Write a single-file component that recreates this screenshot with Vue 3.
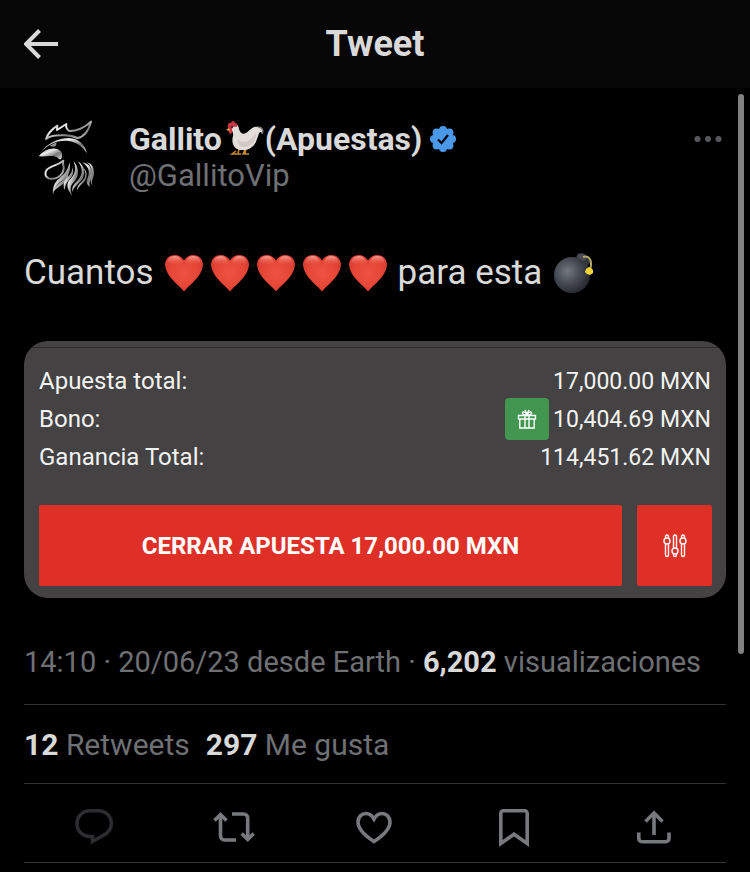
<template>
  <div class="screen">
    <header class="topbar">
      <button class="back" type="button" aria-label="Volver">
        <svg width="36" height="32" viewBox="0 0 36 32">
          <path d="M15.500 2.500 2 16l13.500 13.500M2.500 16H34" />
        </svg>
      </button>
      <h1>Tweet</h1>
    </header>

    <main class="tweet">
      <div class="author">
        <svg class="avatar" width="88" height="90" viewBox="-18 0 264 270" aria-hidden="true">
          <defs>
            <linearGradient id="steel" x1="0" y1="0" x2="1" y2="1">
              <stop offset="0" stop-color="#777" />
              <stop offset=".35" stop-color="#eee" />
              <stop offset=".65" stop-color="#777" />
              <stop offset="1" stop-color="#ddd" />
            </linearGradient>
          </defs>
          <g fill="none" stroke="url(#steel)" stroke-width="6" stroke-linejoin="round" stroke-linecap="round">
            <path d="M48 81C54 64 68 50 82 41L81 54C91 48 99 42 109 36C107 44 110 52 118 57C139 58 165 47 183 29C175 58 159 75 142 78C124 69 108 69 93 70C74 70 58 73 48 81Z" />
            <path d="M100 146C83 160 71 160 61 166C43 173 42 193 56 199C76 205 98 192 101 170C101 158 97 154 100 146Z" />
          </g>
          <g fill="url(#steel)">
            <path d="M30 125C50 94 84 78 117 78C146 79 166 99 171 124C158 104 140 90 115 87C82 84 52 97 30 125Z" />
            <path d="M26 133C40 117 55 108 76 110C91 112 99 121 96 135C95 143 88 145 84 138C72 127 49 135 26 133Z" />
            <path d="M60 101L80 91L78 101C72 104 65 105 60 101Z" />
            <path d="M119 151C112 177 102 188 87 200C74 210 67 224 69 249C74 224 82 216 100 204C118 192 123 174 119 151Z" />
            <path d="M113 184C109 202 96 208 86 216C76 224 71 231 70 239C80 228 94 221 103 212C112 204 117 194 113 184Z" />
            <path d="M131 148C141 176 132 190 119 204C110 214 108 229 127 252C118 228 122 220 134 208C149 190 147 166 131 148Z" />
            <path d="M127 165C128 185 115 192 106 204C98 214 101 230 105 234C105 214 114 210 124 196C130 187 131 175 127 165Z" />
            <path d="M143 148C160 169 158 187 145 203C135 214 124 222 127 240C131 224 147 215 157 201C169 180 163 160 143 148Z" />
            <path d="M156 151C180 167 180 183 172 200C167 212 173 220 180 224C175 211 181 205 185 191C188 169 178 154 156 151Z" />
            <path d="M169 150C188 154 195 173 191 190C187 205 183 209 188 221C177 205 181 196 184 181C186 168 181 158 169 150Z" />
            <path d="M161 169C170 185 166 200 155 209C145 217 140 227 141 235C146 224 155 218 164 208C173 194 172 179 161 169Z" />
          </g>
        </svg>

        <div class="names">
          <div class="name">
            <span>Gallito</span>
            <svg class="rooster" width="38" height="36" viewBox="0 0 38 36" role="img" aria-label="gallo">
              <path d="M10 30l-4 3h9M19 29l-2 4h6M13 28l-1 5M20 27l-1 6" fill="none" stroke="#c98a2c" stroke-width="1.500" />
              <path d="M5 5C8 2 13 3 13 8C14 12 17 14 20 12C25 9 26 5 32 6C36 7 37 9 36 12C33 9 33 14 31 18C29 25 23 30 16 29C8 29 5 22 7 15C8 12 5 9 5 5Z" fill="#e4dedb" />
              <path d="M12 18C16 24 24 21 30 12C30 21 24 27 17 26C12 25 11 22 12 18Z" fill="#d3cac6" />
              <path d="M32 6c4 0 6 3 4 7" fill="none" stroke="#77736f" stroke-width="1.500" />
              <path d="M2 7C1 3 3 1 5 2C6-1 9 0 9 2C12 2 12 5 10 6C7 5 6 7 6 9C7 12 5 14 3 12C2 10 3 9 2 7Z" fill="#c93643" />
              <path d="M3 7 0 9l4 1z" fill="#e0ad4c" />
              <circle cx="6" cy="6" r="1" fill="#222" />
            </svg>
            <span>(Apuestas)</span>
            <svg class="verified" width="26" height="26" viewBox="0 0 26 26" role="img" aria-label="Cuenta verificada">
              <g fill="#4a99e9">
                <circle cx="13" cy="13" r="10" />
                <circle cx="13" cy="4" r="4" />
                <circle cx="19.400" cy="6.600" r="4" />
                <circle cx="22" cy="13" r="4" />
                <circle cx="19.400" cy="19.400" r="4" />
                <circle cx="13" cy="22" r="4" />
                <circle cx="6.600" cy="19.400" r="4" />
                <circle cx="4" cy="13" r="4" />
                <circle cx="6.600" cy="6.600" r="4" />
              </g>
              <path d="M8 13.500l3.500 3.500 6.500-8" fill="none" stroke="#05080c" stroke-width="2.200" />
            </svg>
          </div>
          <a class="handle" href="#">@GallitoVip</a>
        </div>

        <button class="more" type="button" aria-label="Más opciones">
          <svg width="28" height="8" viewBox="0 0 28 8">
            <circle cx="3.500" cy="4" r="3" />
            <circle cx="14" cy="4" r="3" />
            <circle cx="24.500" cy="4" r="3" />
          </svg>
        </button>
      </div>

      <p class="text">
        <span>Cuantos</span>
        <span class="hearts">
          <svg v-for="n in 5" :key="n" width="38" height="38" viewBox="0 0 38 38" role="img" aria-label="corazón">
            <defs>
              <radialGradient :id="'heart' + n" cx=".5" cy=".5" r=".6">
                <stop offset="0" stop-color="#ee5340" />
                <stop offset=".6" stop-color="#e64636" />
                <stop offset="1" stop-color="#d43a31" />
              </radialGradient>
              <linearGradient :id="'shine' + n" x1="0" y1="0" x2="0" y2="1">
                <stop offset="0" stop-color="#ffb9ad" stop-opacity=".8" />
                <stop offset="1" stop-color="#ee5340" stop-opacity="0" />
              </linearGradient>
            </defs>
            <path :fill="'url(#heart' + n + ')'" d="M19 37.500C14 31 1 23 0 11C0 5 4 1 9.500 1C14 1 17 3 19 6.500C21 3 24 1 28.500 1C34 1 38 5 38 11C37 23 24 31 19 37.500Z" />
            <path :fill="'url(#shine' + n + ')'" d="M2 10C2 5 5 2 10 2C14 2 17 5 17 10C12 12 6 12 2 10ZM36 10C36 5 33 2 28 2C24 2 21 5 21 10C26 12 32 12 36 10Z" />
          </svg>
        </span>
        <span>para esta</span>
        <svg class="bomb" width="41" height="40" viewBox="0 0 41 40" role="img" aria-label="bomba">
          <defs>
            <radialGradient id="iron" cx=".38" cy=".4" r=".65">
              <stop offset="0" stop-color="#737981" />
              <stop offset=".5" stop-color="#484c54" />
              <stop offset="1" stop-color="#26282e" />
            </radialGradient>
          </defs>
          <circle cx="19" cy="22" r="18" fill="url(#iron)" />
          <path d="M23 4C25 0 30-1 33 2L38 9L33 14Z" fill="#34373d" />
          <ellipse cx="29" cy="4" rx="5" ry="3" fill="#484c52" transform="rotate(28 29 4)" />
          <path d="M30 4C36 2 40 7 37 17" fill="none" stroke="#b5a76a" stroke-width="2" />
          <path d="M36 14l2 1 2 2v3l-3 2-3-1-2-2 1-3z" fill="#f2d537" />
        </svg>
      </p>

      <section class="bet">
        <dl>
          <div v-for="row in rows" :key="row.label" class="bet-row">
            <dt>{{ row.label }}</dt>
            <dd>
              <span v-if="row.gift" class="gift">
                <svg width="20" height="20" viewBox="0 0 20 20" aria-hidden="true">
                  <path d="M1.500 6.500h17V10h-17zM2.800 10v9h14.400v-9M8 6.500V19M12 6.500V19M10 6C7 6 5 5 5.500 3.500S9 3 10 6C11 3 14 2 14.500 3.500S13 6 10 6M10 5 8 1M10 5l2-4" />
                </svg>
              </span>
              {{ row.value }}
            </dd>
          </div>
        </dl>
        <div class="bet-actions">
          <button class="close-bet" type="button">CERRAR APUESTA 17,000.00 MXN</button>
          <button class="settings" type="button" aria-label="Ajustes">
            <svg width="24" height="24" viewBox="0 0 24 24">
              <circle cx="4" cy="7" r="3" />
              <circle cx="12" cy="17" r="3" />
              <circle cx="20" cy="7" r="3" />
              <path d="M2.500 4V2.500a1.500 1.500 0 0 1 3 0V4M2.500 10v11a1.500 1.500 0 0 0 3 0V10M10.500 14V2.500a1.500 1.500 0 0 1 3 0V14M10.500 20v1a1.500 1.500 0 0 0 3 0v-1M18.500 4V2.500a1.500 1.500 0 0 1 3 0V4M18.500 10v11a1.500 1.500 0 0 0 3 0V10" />
            </svg>
          </button>
        </div>
      </section>

      <p class="meta">14:10 · 20/06/23 desde Earth · <strong>6,202</strong> visualizaciones</p>

      <div class="stats">
        <a href="#"><strong>12</strong> Retweets</a>
        <a href="#"><strong>297</strong> Me gusta</a>
      </div>

      <div class="actions">
        <button v-for="action in actions" :key="action.label" type="button" :aria-label="action.label" :disabled="action.disabled">
          <svg width="48" height="48" viewBox="0 0 48 48">
            <path :d="action.icon" />
          </svg>
        </button>
      </div>
    </main>

    <div class="scrollbar"></div>
  </div>
</template>

<script setup>
const rows = [
  { label: 'Apuesta total:', value: '17,000.00 MXN' },
  { label: 'Bono:', value: '10,404.69 MXN', gift: true },
  { label: 'Ganancia Total:', value: '114,451.62 MXN' }
]

const actions = [
  {
    label: 'Responder',
    disabled: true,
    icon: 'M20 7.700h8C35.500 7.700 41.300 13 41.300 20.500C41.300 26 38 30 33 32.500L22.500 38.500V33.500H20C12.500 33.500 7 28 7 20.700S12.500 7.700 20 7.700Z'
  },
  {
    label: 'Retwittear',
    icon: 'M4.500 17.500 10.500 11.500l6 6M10.500 12v21a4 4 0 0 0 4 4H26M22 11h11.700a4 4 0 0 1 4 4v21M31.700 30.500l6 6 6-6'
  },
  {
    label: 'Me gusta',
    icon: 'M24 38.500C14 32 8 25.500 8 19C8 14 11.600 10.500 16 10.500C19.300 10.500 22 12.500 24 16C26 12.500 28.700 10.500 32 10.500C36.400 10.500 40 14 40 19C40 25.500 34 32 24 38.500Z'
  },
  {
    label: 'Guardar',
    icon: 'M10.800 40.500V10.300a2.500 2.500 0 0 1 2.500-2.500h21.400a2.500 2.500 0 0 1 2.500 2.500v30.200L24 31.200Z'
  },
  {
    label: 'Compartir',
    icon: 'M15.500 18.500 24 10l8.500 8.500M24 10.500V32M8.800 29.500v6a3.200 3.200 0 0 0 3.200 3.200h23.800a3.200 3.200 0 0 0 3.200-3.200v-6'
  }
]
</script>

<style>
body {
  margin: 0;
  background: #000;
}
</style>

<style scoped>
.screen {
  position: relative;
  min-height: 100vh;
  background: #000;
  color: #d9d9d9;
  font-family: Roboto, "Liberation Sans", sans-serif;
}

button {
  padding: 0;
  border: none;
  background: none;
  color: inherit;
  font: inherit;
  cursor: pointer;
}

a {
  color: inherit;
  text-decoration: none;
}

svg {
  display: block;
  flex: none;
}

.topbar {
  display: grid;
  grid-template-columns: 1fr auto 1fr;
  align-items: center;
  height: 88px;
  padding: 0 24px;
  background: #070707;
}

.topbar h1 {
  margin: 0;
  font-size: 36px;
  line-height: 42px;
  font-weight: 700;
}

.back {
  justify-self: start;
}

.back svg {
  fill: none;
  stroke: #d9d9d9;
  stroke-width: 4;
}

.tweet {
  padding: 24px 24px 0;
}

.author {
  display: flex;
  align-items: flex-start;
}

.names {
  flex: 1;
  padding: 8px 0 0 17px;
}

.name {
  display: flex;
  align-items: center;
  font-size: 32px;
  line-height: 38px;
  font-weight: 700;
}

.rooster {
  margin: 0 1px 0 4px;
}

.verified {
  margin-left: 8px;
}

.handle {
  display: block;
  color: #6e7074;
  font-size: 31px;
  line-height: 36px;
}

.more {
  padding: 23px 4px;
}

.more svg {
  fill: #56585c;
}

.text {
  display: flex;
  align-items: center;
  gap: 11px;
  margin: 50px 0 0;
  font-size: 35px;
  line-height: 42px;
}

.hearts {
  display: flex;
  gap: 8px;
}

.bet {
  margin-top: 47px;
  padding: 6px 0 12px;
  border-radius: 24px;
  overflow: hidden;
  background: #444243;
  color: #f3f3f3;
  font-size: 23px;
}

.bet dl {
  margin: 0;
  padding: 14px 15px 0;
  border-top: 1px solid #2c2a2b;
}

.bet-row {
  display: flex;
  justify-content: space-between;
  align-items: center;
  height: 38px;
}

.bet-row dt {
  font-size: 24px;
}

.bet-row dd {
  display: flex;
  align-items: center;
  gap: 4px;
  margin: 0;
}

.gift {
  display: grid;
  place-items: center;
  width: 44px;
  height: 42px;
  border-radius: 4px;
  background: #42964f;
}

.gift svg,
.settings svg {
  fill: none;
  stroke: #fff;
  stroke-width: 1.4;
}

.bet-actions {
  display: flex;
  gap: 15px;
  margin-top: 29px;
  padding: 0 14px 0 15px;
}

.bet-actions button {
  display: grid;
  place-items: center;
  height: 81px;
  border-radius: 2px;
  background: #df3027;
  color: #fff;
}

.bet-actions .close-bet {
  flex: 1;
  font-size: 24px;
  font-weight: 700;
}

.bet-actions .settings {
  width: 75px;
}

.meta {
  margin: 0;
  padding: 43px 0 21px;
  border-bottom: 1px solid #333436;
  color: #6e7074;
  font-size: 29px;
  line-height: 42px;
}

.meta strong,
.stats strong {
  color: #d9d9d9;
}

.stats {
  display: flex;
  gap: 16px;
  padding: 19px 0 17px;
  border-bottom: 1px solid #333436;
  color: #6e7074;
  font-size: 30px;
  line-height: 42px;
}

.actions {
  display: grid;
  grid-template-columns: repeat(5, 1fr);
  justify-items: center;
  padding: 19px 2px 11px 0;
  border-bottom: 1px solid #333436;
}

.actions svg {
  fill: none;
  stroke: #77797d;
  stroke-width: 3.6;
}

.actions button:disabled svg {
  stroke: #2d2d2f;
}

.scrollbar {
  position: absolute;
  top: 94px;
  right: 6px;
  width: 6px;
  height: 560px;
  border-radius: 3px;
  background: #808080;
}
</style>
